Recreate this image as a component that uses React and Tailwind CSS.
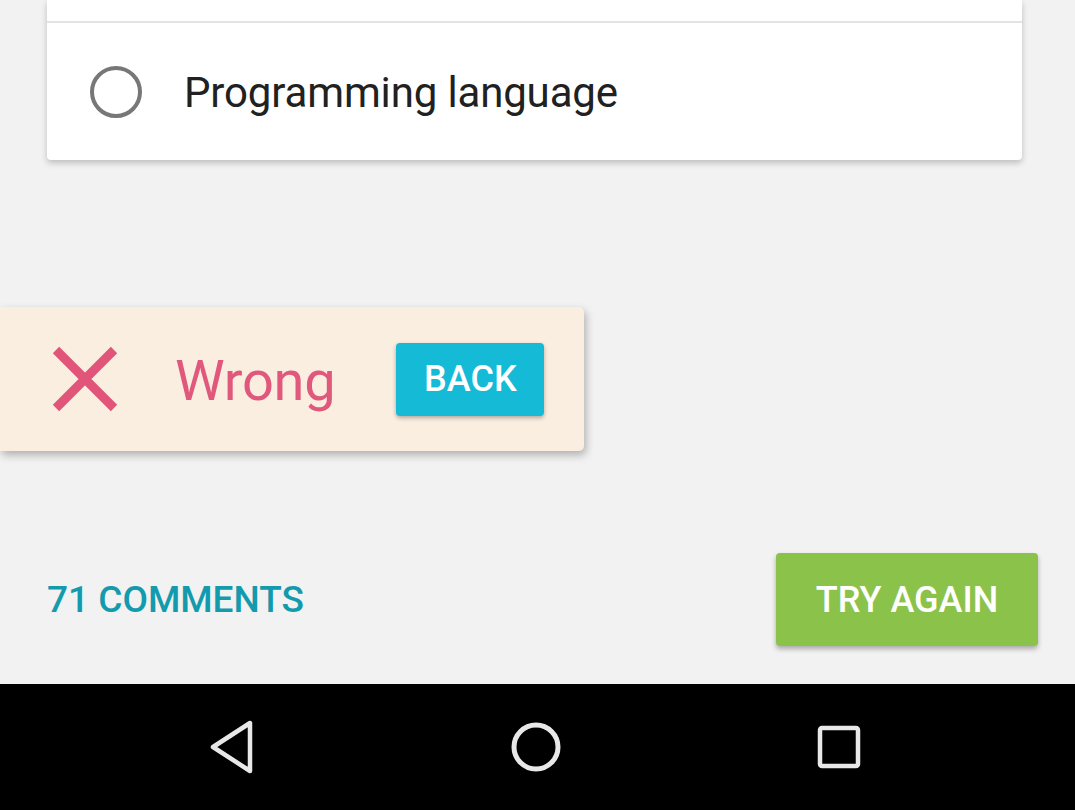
export default function App() {
  return (
    <div className="flex h-[810px] w-[1075px] flex-col overflow-hidden bg-[#f2f2f2]" style={{ fontFamily: "Roboto, 'Noto Sans', sans-serif" }}>
      <div className="flex h-[684px] flex-col">
        {/* card */}
        <div className="ml-[47px] w-[975px] rounded-b-[4px] bg-white shadow-[0_3px_6px_rgba(0,0,0,0.22)]">
          <div className="h-[21px]" />
          <div className="h-[2px] bg-[#e3e3e3]" />
          <div className="flex h-[137px] items-center pl-[43px]">
            <div className="h-[52px] w-[52px] rounded-full border-[4.5px] border-[#777777]" />
            <span className="ml-[42px] pt-[3px] text-[42px] leading-none tracking-[-0.15px] text-[#212121]">Programming language</span>
          </div>
        </div>

        {/* snackbar */}
        <div className="mt-[147px] flex h-[144px] w-[584px] items-center rounded-r-[5px] bg-[#faeee0] shadow-[2px_4px_8px_rgba(0,0,0,0.28)]">
          <svg className="ml-[52px] shrink-0" width="66" height="66" viewBox="0 0 66 66">
            <path d="M4 4 L62 62 M62 4 L4 62" stroke="#e2557a" strokeWidth="9" strokeLinecap="butt" />
          </svg>
          <span className="ml-[57px] pt-[4px] text-[56px] leading-none tracking-[-0.3px] text-[#e0587b]">Wrong</span>
          <button className="ml-[61px] flex h-[73px] w-[148px] items-center justify-center rounded-[4px] bg-[#14bad6] text-[36px] font-medium leading-none text-white shadow-[0_2px_4px_rgba(0,0,0,0.3)]">
            BACK
          </button>
        </div>

        {/* bottom row */}
        <div className="mt-[102px] flex items-center justify-between pl-[47px] pr-[37px]">
          <span className="text-[37px] font-medium leading-none text-[#139aad]">71 COMMENTS</span>
          <button className="flex h-[93px] w-[262px] items-center justify-center rounded-[4px] bg-[#8bc34a] text-[36px] font-medium leading-none text-white shadow-[0_3px_5px_rgba(0,0,0,0.3)]">
            TRY AGAIN
          </button>
        </div>
      </div>

      {/* nav bar */}
      <div className="relative h-[126px] bg-black">
        <div className="flex h-full items-center">
          <svg className="ml-[209px]" width="46" height="54" viewBox="0 0 46 54">
            <path d="M41 3 L41 51 L4 27 Z" fill="none" stroke="#e8e8e8" strokeWidth="4.5" strokeLinejoin="round" />
          </svg>
          <svg className="ml-[254px]" width="54" height="54" viewBox="0 0 54 54">
            <circle cx="27" cy="27" r="22" fill="none" stroke="#e8e8e8" strokeWidth="5" />
          </svg>
          <svg className="ml-[252px]" width="48" height="48" viewBox="0 0 48 48">
            <rect x="5" y="5" width="38" height="38" rx="2" fill="none" stroke="#e8e8e8" strokeWidth="4.5" />
          </svg>
        </div>
      </div>
    </div>
  );
}
